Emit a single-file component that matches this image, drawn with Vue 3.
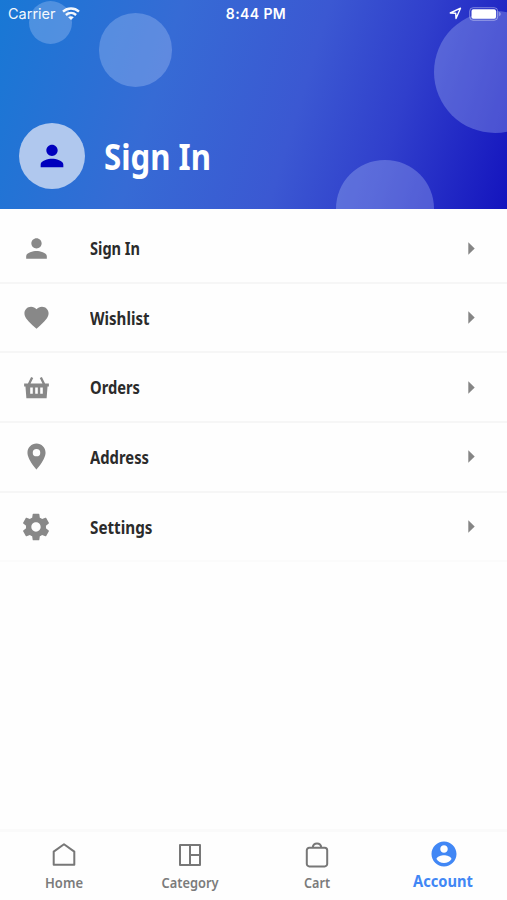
<script setup>
const person = 'M12 12c2.21 0 4-1.79 4-4s-1.79-4-4-4-4 1.79-4 4 1.79 4 4 4zm0 2c-2.67 0-8 1.34-8 4v2h16v-2c0-2.66-5.33-4-8-4z'

const rows = [
  { label: 'Sign In', width: 50, size: 31, path: person },
  {
    label: 'Wishlist', width: 59.5, size: 29,
    path: 'M12 21.35l-1.45-1.32C5.4 15.36 2 12.28 2 8.5 2 5.42 4.42 3 7.5 3c1.74 0 3.41.81 4.5 2.09C13.09 3.81 14.76 3 16.5 3 19.58 3 22 5.42 22 8.5c0 3.78-3.4 6.86-8.55 11.54L12 21.35z',
  },
  {
    label: 'Orders', width: 50, size: 27,
    path: 'M1 8.5h3.4L7.2 2.6l1.900.9-2.4 5h10.6l-2.4-5 1.9-.9 2.8 5.900H23v2.6h-1.2L21 21.5H3L2.2 11.1H1zM6.4 12v5.5h2.3V12zm4.45 0v5.5h2.3V12zm4.45 0v5.5h2.3V12z',
  },
  {
    label: 'Address', width: 59, size: 31,
    path: 'M12 2C8.13 2 5 5.13 5 9c0 5.25 7 13 7 13s7-7.75 7-13c0-3.87-3.13-7-7-7zm0 4.1a2.9 2.9 0 1 1 0 5.8 2.9 2.9 0 0 1 0-5.800z',
  },
  {
    label: 'Settings', width: 62.5, size: 32,
    path: 'M19.43 12.98c.04-.32.07-.64.07-.98s-.03-.66-.07-.98l2.11-1.65c.19-.15.24-.42.12-.64l-2-3.46c-.12-.22-.39-.3-.61-.22l-2.49 1c-.52-.4-1.08-.73-1.69-.98l-.38-2.65C14.46 2.18 14.25 2 14 2h-4c-.25 0-.46.18-.49.42l-.38 2.65c-.61.25-1.17.59-1.69.98l-2.49-1c-.23-.09-.49 0-.61.22l-2 3.46c-.13.22-.07.49.12.64l2.11 1.65c-.04.32-.07.65-.07.98s.03.66.07.98l-2.11 1.65c-.19.15-.24.42-.12.64l2 3.46c.12.22.39.3.61.22l2.49-1c.52.4 1.08.73 1.69.98l.38 2.65c.03.24.24.42.49.42h4c.25 0 .46-.18.49-.42l.38-2.65c.61-.25 1.17-.59 1.69-.98l2.49 1c.23.09.49 0 .61-.22l2-3.46c.12-.22.07-.49-.12-.64l-2.11-1.65zM12 15.5c-1.93 0-3.5-1.57-3.5-3.5s1.57-3.5 3.5-3.5 3.5 1.57 3.5 3.5-1.57 3.5-3.5 3.5z',
  },
]

const tabs = [
  { label: 'Home', width: 38, path: 'M2.7 22.7V9.6L13 2.2l10.3 7.4v13.1z' },
  { label: 'Category', width: 57, path: 'M3 3h20v20H3zM13 3v20M13 13h10' },
  {
    label: 'Cart', width: 26,
    path: 'M5.3 5.8h15.4a2.5 2.5 0 0 1 2.5 2.5v13.6a2.5 2.5 0 0 1-2.5 2.5H5.3a2.5 2.5 0 0 1-2.5-2.5V8.3a2.5 2.5 0 0 1 2.5-2.5zM8.7 5.6c.3-2.8 2-4.2 4.3-4.2s4 1.4 4.3 4.2',
  },
  { label: 'Account', width: 60, active: true },
]
</script>

<template>
  <div class="screen">
    <header class="hero">
      <i class="bubble tiny"></i>
      <i class="bubble medium"></i>
      <i class="bubble large"></i>
      <i class="bubble low"></i>
      <div class="status">
        <div class="left">
          <span>Carrier</span>
          <svg width="18" height="14" viewBox="0 0 18 14" fill="none" stroke="#fff" stroke-width="2.4">
            <path d="M1 4.6C5.5.5 12.5.5 17 4.6M3.9 8c3-2.7 7.2-2.7 10.2 0" />
            <path d="M9 13L6.2 10.2c1.7-1.4 3.9-1.4 5.6 0z" fill="#fff" stroke="none" />
          </svg>
        </div>
        <span class="time">8:44 PM</span>
        <div class="right">
          <svg width="13" height="13" viewBox="0 0 13 13">
            <path d="M1.3 6L11.5 1.2 7 11.5 6.7 6.2z" fill="none" stroke="#fff" stroke-width="1.4" stroke-linejoin="round" />
          </svg>
          <svg width="33" height="14" viewBox="0 0 33 14">
            <rect x=".7" y=".7" width="28" height="12.6" rx="3.5" fill="none" stroke="#fff" stroke-opacity=".4" />
            <rect x="2.5" y="2.3" width="24.5" height="9.4" rx="1.8" fill="#fff" />
            <path d="M30.3 4.8c1.8.8 1.8 3.6 0 4.4z" fill="#fff" fill-opacity=".5" />
          </svg>
        </div>
      </div>
      <div class="profile">
        <div class="avatar">
          <svg width="34" height="34" viewBox="0 0 24 24"><path :d="person" fill="#0000bd" /></svg>
        </div>
        <svg class="title" width="130" height="54">
          <text x="0" y="41" textLength="107" lengthAdjust="spacingAndGlyphs">Sign In</text>
        </svg>
      </div>
    </header>

    <main class="list">
      <div v-for="row in rows" :key="row.label" class="row">
        <div class="icon">
          <svg :width="row.size" :height="row.size" viewBox="0 0 24 24"><path :d="row.path" fill="#888" fill-rule="evenodd" /></svg>
        </div>
        <svg class="label" width="100" height="26">
          <text x="0" y="20" :textLength="row.width" lengthAdjust="spacingAndGlyphs">{{ row.label }}</text>
        </svg>
        <svg class="arrow" width="7" height="13" viewBox="0 0 7 13"><path d="M.3.3L6.7 6.5.3 12.7z" fill="#858585" /></svg>
      </div>
    </main>

    <nav class="tabs">
      <div v-for="tab in tabs" :key="tab.label" class="tab" :class="{ active: tab.active }">
        <svg v-if="tab.active" width="30" height="30" viewBox="0 0 24 24">
          <path fill="#4187f5" d="M12 2C6.48 2 2 6.48 2 12s4.48 10 10 10 10-4.48 10-10S17.52 2 12 2zm0 3c1.66 0 3 1.34 3 3s-1.34 3-3 3-3-1.34-3-3 1.34-3 3-3zm0 14.2c-2.5 0-4.71-1.28-6-3.22.03-1.99 4-3.08 6-3.08 1.99 0 5.97 1.09 6 3.08-1.29 1.94-3.5 3.22-6 3.22z" />
        </svg>
        <svg v-else width="26" height="30" viewBox="0 -2 26 30" fill="none" stroke="#777" stroke-width="2" stroke-linejoin="round">
          <path :d="tab.path" />
        </svg>
        <svg class="caption" width="80" height="24">
          <text x="40" y="18" text-anchor="middle" :textLength="tab.width" lengthAdjust="spacingAndGlyphs">{{ tab.label }}</text>
        </svg>
      </div>
    </nav>
  </div>
</template>

<style>
body { margin: 0; background: #fefefe; }
</style>

<style scoped>
.screen {
  width: 507px;
  height: 900px;
  display: flex;
  flex-direction: column;
  overflow: hidden;
  background: #fefefe;
  font-family: "Noto Sans", "Open Sans", sans-serif;
}
svg { display: block; flex: none; }
.hero {
  position: relative;
  height: 208.5px;
  flex: none;
  overflow: hidden;
  background: linear-gradient(107deg, #1878d5 0%, #366bd5 32%, #3b58d2 58%, #303fcc 76%, #1414be 100%);
}
.bubble {
  position: absolute;
  border-radius: 50%;
  background: rgba(200, 220, 255, 0.28);
}
.tiny { left: 28.5px; top: 0.5px; width: 43px; height: 43px; }
.medium { left: 98.5px; top: 13px; width: 73.5px; height: 73.5px; }
.large { left: 433.5px; top: 11px; width: 122px; height: 122px; }
.low { left: 336px; top: 159.5px; width: 97.5px; height: 97.5px; }
.status {
  position: relative;
  height: 27px;
  padding: 0 5px 0 8px;
  display: grid;
  grid-template-columns: 1fr auto 1fr;
  align-items: center;
  color: #fff;
  font: 500 14px/27px Inter, sans-serif;
}
.left, .right { display: flex; align-items: center; }
.left { gap: 6px; font-weight: 400; font-size: 14.5px; opacity: 0.95; }
.right { justify-content: flex-end; gap: 7px; }
.time { font-weight: 600; letter-spacing: 0.4px; margin-left: 2px; }
.profile {
  position: relative;
  margin-top: 96px;
  padding-left: 19px;
  display: flex;
  align-items: center;
}
.avatar {
  width: 66px;
  height: 66px;
  border-radius: 50%;
  background: #b0c8ee;
  display: flex;
  align-items: center;
  justify-content: center;
}
.title {
  margin-left: 19px;
  font-size: 35.5px;
  font-weight: 700;
  fill: #fff;
}
.list { padding-top: 5.7px; }
.row {
  box-sizing: border-box;
  height: 69.65px;
  padding-right: 32px;
  display: flex;
  align-items: center;
  border-bottom: 2px solid #f6f6f6;
}
.row:last-child { border-color: #fbfbfb; }
.icon { width: 72.5px; display: flex; justify-content: center; }
.label {
  margin-left: 17.5px;
  font-size: 17px;
  font-weight: 700;
  fill: #2b2b2b;
}
.arrow { margin-left: auto; }
.tabs {
  margin-top: auto;
  height: 71px;
  display: grid;
  grid-template-columns: repeat(4, 126.5px);
  justify-content: center;
  border-top: 3px solid #fafafa;
  box-sizing: border-box;
}
.tab {
  display: flex;
  flex-direction: column;
  align-items: center;
  padding-top: 7.5px;
}
.tab:first-child { padding-left: 1px; }
.caption {
  font-size: 14.5px;
  font-weight: 600;
  fill: #7b7b7b;
}
.active { padding: 6.5px 0 0 1px; }
.active .caption {
  margin: 0 2px 0 0;
  font-size: 16px;
  font-weight: 700;
  fill: #4187f5;
}
</style>
